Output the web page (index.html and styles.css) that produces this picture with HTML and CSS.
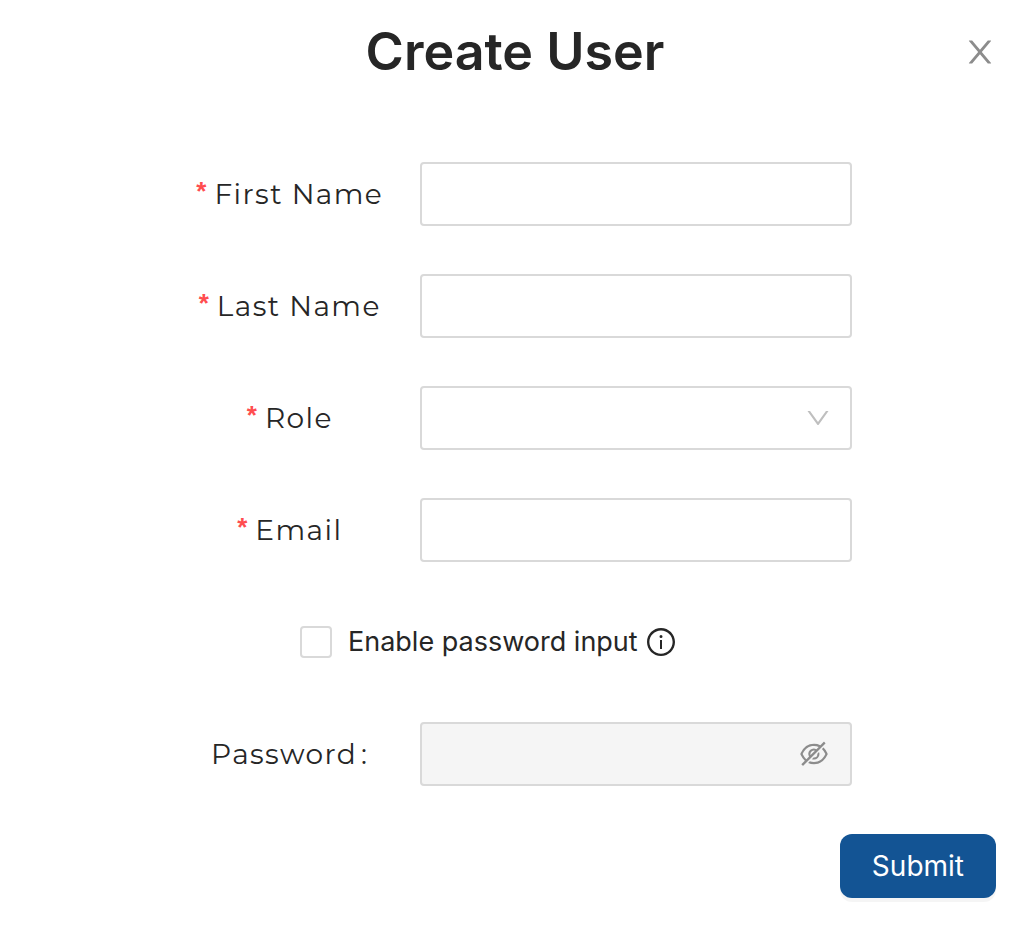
FILE: index.html
```html
<!DOCTYPE html>
<html lang="en">
<head>
<meta charset="utf-8">
<meta name="viewport" content="width=device-width, initial-scale=1">
<title>Create User</title>
<link rel="stylesheet" href="styles.css">
</head>
<body>
<main class="dialog">
  <header class="header">
    <h1 class="title">Create User</h1>
    <button class="close" type="button" aria-label="Close">
      <svg class="icon-close" viewBox="0 0 1024 1024" aria-hidden="true"><path d="M563.8 512l262.5-312.9c4.4-5.2.7-13.1-6.1-13.1h-79.8c-4.7 0-9.2 2.1-12.3 5.7L511.6 449.8 295.1 191.7c-3-3.6-7.5-5.7-12.3-5.7H203c-6.8 0-10.5 7.9-6.1 13.1L459.4 512 196.9 824.9A7.95 7.95 0 00203 838h79.8c4.7 0 9.2-2.1 12.3-5.7l216.5-258.1 216.5 258.1c3 3.6 7.5 5.7 12.3 5.7h79.8c6.8 0 10.5-7.9 6.1-13.1L563.8 512z"/></svg>
    </button>
  </header>
  <form class="form">
    <div class="row">
      <label class="label required" for="first-name">First Name</label>
      <input class="control" id="first-name" type="text">
    </div>
    <div class="row">
      <label class="label required" for="last-name">Last Name</label>
      <input class="control" id="last-name" type="text">
    </div>
    <div class="row">
      <label class="label required" for="role">Role</label>
      <div class="field">
        <select class="control" id="role"><option value=""></option></select>
        <svg class="icon-down" viewBox="0 0 1024 1024" aria-hidden="true"><path d="M884 256h-75c-5.1 0-9.9 2.5-12.9 6.6L512 654.2 227.9 262.6c-3-4.1-7.8-6.6-12.9-6.6h-75c-6.5 0-10.3 7.4-6.5 12.7l352.6 486.1c12.8 17.6 39 17.6 51.7 0l352.6-486.1c3.9-5.3.1-12.7-6.4-12.7z"/></svg>
      </div>
    </div>
    <div class="row">
      <label class="label required" for="email">Email</label>
      <input class="control" id="email" type="email">
    </div>
    <div class="toggle">
      <input class="checkbox" id="enable-password" type="checkbox">
      <label class="toggle-label" for="enable-password">Enable password input</label>
      <svg class="icon-info" viewBox="0 0 1024 1024" aria-hidden="true"><path d="M512 64C264.6 64 64 264.6 64 512s200.6 448 448 448 448-200.6 448-448S759.4 64 512 64zm0 820c-205.4 0-372-166.6-372-372s166.6-372 372-372 372 166.6 372 372-166.6 372-372 372z"/><path d="M464 336a48 48 0 1096 0 48 48 0 10-96 0zm72 112h-48c-4.4 0-8 3.6-8 8v272c0 4.4 3.6 8 8 8h48c4.4 0 8-3.6 8-8V456c0-4.4-3.6-8-8-8z"/></svg>
    </div>
    <div class="row">
      <label class="label" for="password">Password<span class="colon">:</span></label>
      <div class="field">
        <input class="control" id="password" type="password" disabled>
        <svg class="icon-eye" viewBox="0 0 1024 1024" aria-hidden="true"><path d="M942.2 486.2Q889.47 375.11 816.7 305l-50.88 50.88C807.31 395.53 843.45 447.4 874.7 512 791.5 684.2 673.4 766 512 766q-72.67 0-133.87-22.38L323 798.75Q408 838 512 838q288.3 0 430.2-300.3a60.29 60.29 0 000-51.5zm-63.57-320.64L836 122.88a8 8 0 00-11.32 0L715.31 232.2Q624.86 186 512 186q-288.3 0-430.2 300.3a60.3 60.3 0 000 51.5q56.69 119.4 136.5 191.41L112.48 835a8 8 0 000 11.31L155.17 889a8 8 0 0011.31 0l712.15-712.12a8 8 0 000-11.32zM149.3 512C232.6 339.8 350.7 258 512 258c54.54 0 104.13 9.36 149.12 28.39l-70.3 70.3a176 176 0 00-238.13 238.13l-83.42 83.42C223.1 637.49 183.3 582.28 149.3 512zm246.7 0a112.11 112.11 0 01146.2-106.69L401.31 546.2A112 112 0 01396 512z"/><path d="M508 624c-3.46 0-6.87-.16-10.25-.47l-52.82 52.82a176.09 176.09 0 00227.42-227.42l-52.82 52.82c.31 3.38.47 6.79.47 10.25a111.94 111.94 0 01-112 112z"/></svg>
      </div>
    </div>
    <button class="submit" type="submit">Submit</button>
  </form>
</main>
</body>
</html>
```
FILE: styles.css
```css
* {
  box-sizing: border-box;
}

body {
  margin: 0;
  background: #fff;
  color: #262626;
  font-family: Inter, Roboto, sans-serif;
  font-size: 28px;
  line-height: 32px;
}

svg {
  display: block;
  fill: currentColor;
}

.header {
  display: grid;
  grid-template-columns: 1fr auto 1fr;
  align-items: center;
  padding: 16px 32px 0;
}

.title {
  grid-column: 2;
  margin: 0;
  font-size: 52px;
  font-weight: 600;
  line-height: 72px;
}

.close {
  justify-self: end;
  padding: 0;
  border: 0;
  background: none;
  color: #8c8c8c;
  cursor: pointer;
}

.icon-close {
  width: 36px;
  height: 36px;
}

.form {
  display: flex;
  flex-direction: column;
  gap: 48px;
  padding: 74px 34px 32px;
}

.row {
  display: grid;
  grid-template-columns: 3fr 5fr;
  align-items: center;
  padding: 0 144px 0 126px;
}

.label {
  justify-self: center;
  font-family: Montserrat, Inter, sans-serif;
  letter-spacing: 0.05em;
}

.required::before {
  content: "*";
  margin-right: 8px;
  color: #ff4d4f;
  font-family: "Liberation Sans", sans-serif;
  font-size: 26px;
  font-weight: 700;
  letter-spacing: normal;
  line-height: 1;
  vertical-align: 4px;
}

.colon {
  margin-left: 4px;
}

.field {
  display: grid;
  position: relative;
}

.control {
  appearance: none;
  width: 100%;
  height: 64px;
  margin: 0;
  padding: 0 22px;
  border: 2px solid #d9d9d9;
  border-radius: 4px;
  background: #fff;
  color: inherit;
  font: inherit;
}

.control:disabled {
  background: #f5f5f5;
}

.icon-down,
.icon-eye {
  position: absolute;
  top: 0;
  bottom: 0;
  margin: auto;
  pointer-events: none;
}

.icon-down {
  right: 20px;
  width: 28px;
  height: 28px;
  color: #bfbfbf;
}

.icon-eye {
  right: 22px;
  width: 32px;
  height: 32px;
  color: #8c8c8c;
}

.toggle {
  display: flex;
  align-items: center;
  height: 64px;
  padding-left: 266px;
}

.checkbox {
  appearance: none;
  width: 32px;
  height: 32px;
  margin: 0 16px 0 0;
  border: 2px solid #d9d9d9;
  border-radius: 4px;
  background: #fff;
}

.checkbox:checked {
  border-color: #135494;
  background: #135494;
}

.toggle-label {
  font-size: 27px;
}

.icon-info {
  width: 32px;
  height: 32px;
  margin-left: 7px;
}

.submit {
  align-self: flex-end;
  height: 64px;
  padding: 0 32px;
  border: 0;
  border-radius: 12px;
  background: #135494;
  box-shadow: 0 4px 0 rgba(0, 0, 0, 0.04);
  color: #fff;
  font: inherit;
  cursor: pointer;
}
```
